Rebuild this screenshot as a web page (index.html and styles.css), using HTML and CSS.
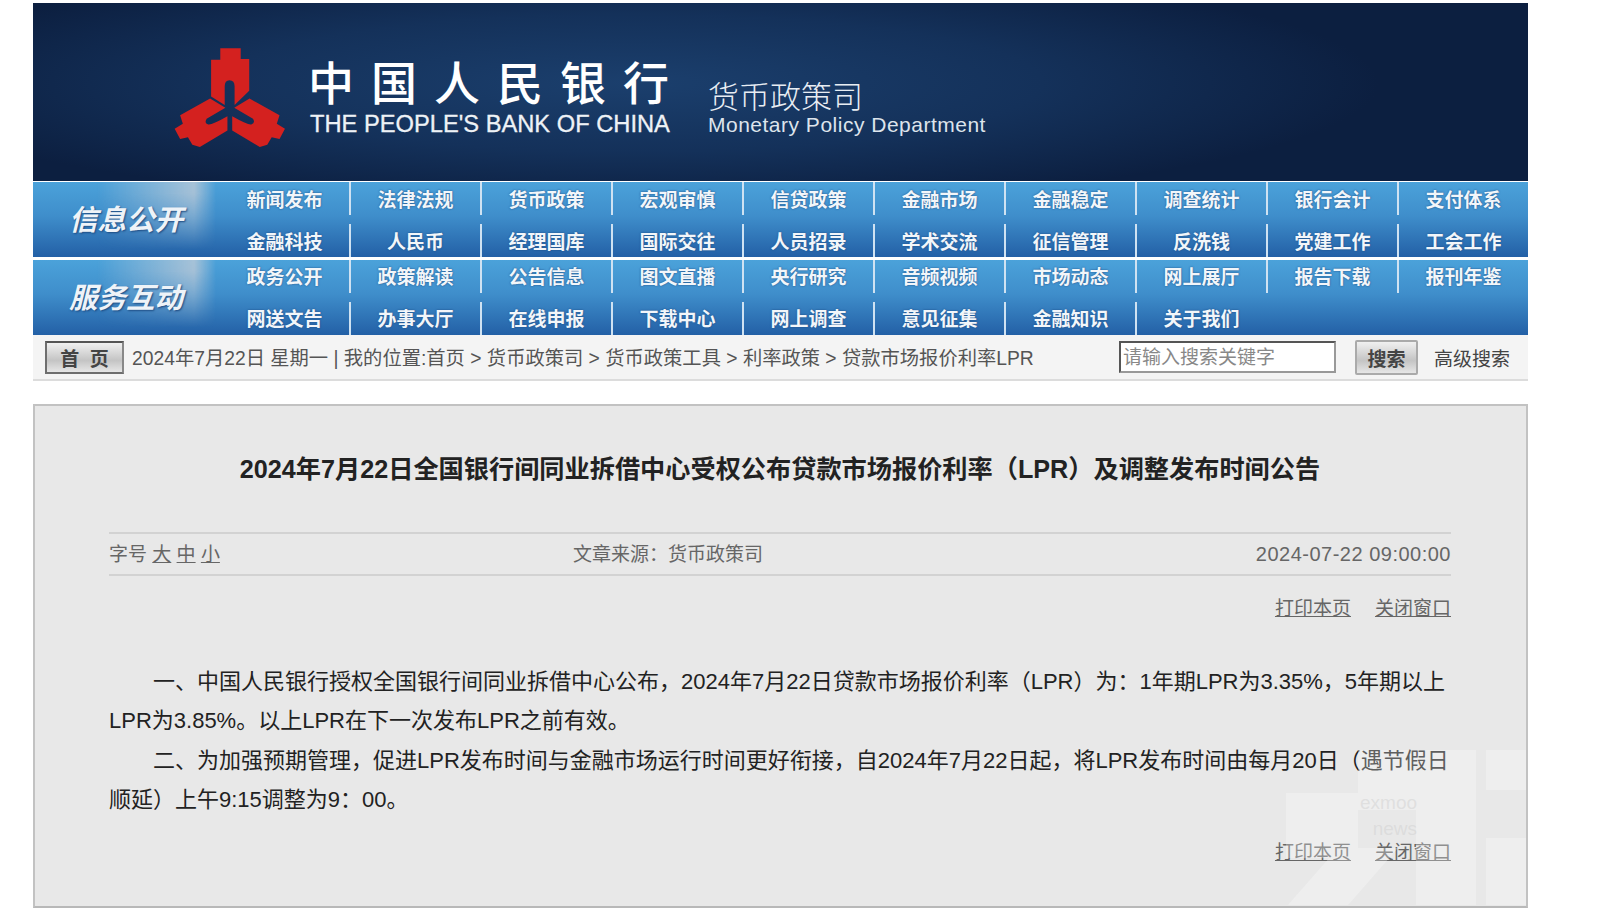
FILE: index.html
```html
<!DOCTYPE html>
<html lang="zh-CN">
<head>
  <meta charset="UTF-8">
  <meta name="viewport" content="width=device-width, initial-scale=1.0">
  <title>中国人民银行 货币政策司</title>
  <link rel="stylesheet" href="styles.css">
</head>
<body>
  <div class="page">
    <header class="banner">
      <svg class="logo" viewBox="0 0 420 360" aria-hidden="true">
        <path d="M180 38H240V70H265V163L222 205V150Q222 132 207 132Q193 132 193 150V205L153 180V72H180Z"/>
        <path d="M150 186L195 213L140 245Q132 258 145 262Q155 264 201 238V280L120 328L98 322L85 300L62 305L46 275L70 260L62 235Z"/>
        <path d="M266 186L221 213L276 245Q284 258 271 262Q261 264 215 238V280L296 328L318 322L331 300L354 305L370 275L346 260L354 235Z"/>
      </svg>
      <div class="brand">
        <div class="brand-cn">中国人民银行</div>
        <div class="brand-en">THE PEOPLE'S BANK OF CHINA</div>
      </div>
      <div class="dept">
        <div class="dept-cn">货币政策司</div>
        <div class="dept-en">Monetary Policy Department</div>
      </div>
    </header>

    <nav class="nav-group">
      <div class="nav-label"><span>信息公开</span></div>
      <div class="nav-grid">
        <a>新闻发布</a><a>法律法规</a><a>货币政策</a><a>宏观审慎</a><a>信贷政策</a><a>金融市场</a><a>金融稳定</a><a>调查统计</a><a>银行会计</a><a>支付体系</a>
        <a>金融科技</a><a>人民币</a><a>经理国库</a><a>国际交往</a><a>人员招录</a><a>学术交流</a><a>征信管理</a><a>反洗钱</a><a>党建工作</a><a>工会工作</a>
      </div>
    </nav>
    <nav class="nav-group second">
      <div class="nav-label"><span>服务互动</span></div>
      <div class="nav-grid">
        <a>政务公开</a><a>政策解读</a><a>公告信息</a><a>图文直播</a><a>央行研究</a><a>音频视频</a><a>市场动态</a><a>网上展厅</a><a>报告下载</a><a>报刊年鉴</a>
        <a>网送文告</a><a>办事大厅</a><a>在线申报</a><a>下载中心</a><a>网上调查</a><a>意见征集</a><a>金融知识</a><a>关于我们</a>
      </div>
    </nav>

    <div class="crumbs">
      <button class="home-btn">首 页</button>
      <span class="crumb-text">2024年7月22日 星期一 | 我的位置:首页 &gt; 货币政策司 &gt; 货币政策工具 &gt; 利率政策 &gt; 贷款市场报价利率LPR</span>
      <div class="search-box">请输入搜索关键字</div>
      <button class="search-btn">搜索</button>
      <span class="adv">高级搜索</span>
    </div>

    <main class="panel">
      <h1>2024年7月22日全国银行间同业拆借中心受权公布贷款市场报价利率（LPR）及调整发布时间公告</h1>
      <div class="meta">
        <span class="meta-size">字号 <u>大</u> <u>中</u> <u>小</u></span>
        <span class="meta-src">文章来源：货币政策司</span>
        <span class="meta-date">2024-07-22 09:00:00</span>
      </div>
      <div class="tools"><a>打印本页</a><a>关闭窗口</a></div>
      <article class="content">
        <p>一、中国人民银行授权全国银行间同业拆借中心公布，2024年7月22日贷款市场报价利率（LPR）为：1年期LPR为3.35%，5年期以上LPR为3.85%。以上LPR在下一次发布LPR之前有效。</p>
        <p>二、为加强预期管理，促进LPR发布时间与金融市场运行时间更好衔接，自2024年7月22日起，将LPR发布时间由每月20日（遇节假日顺延）上午9:15调整为9：00。</p>
      </article>
      <div class="tools bottom"><a>打印本页</a><a>关闭窗口</a></div>

      <!-- faint watermark over the corner -->
      <div class="watermark">
        <svg width="240" height="158" aria-hidden="true">
          <path d="M72 2H190V62H72ZM0 45H72V110H0ZM200 2H240V42H200ZM2 157L52 100H112L62 157ZM130 62H190V157H130ZM200 90H240V157H200Z"/>
        </svg>
        <span class="wm-text">exmoo<br>news</span>
      </div>
    </main>
  </div>
</body>
</html>
```

FILE: styles.css
```css
body {
  margin: 0;
  background-color: #fff;
  color: #222;
  font-family: "Liberation Sans", "Noto Sans CJK SC", sans-serif;
}

.page {
  width: 1495px;
  margin-left: 33px;
  padding-top: 3px;
}

.banner {
  height: 178px;
  display: flex;
  align-items: flex-start;
  background: radial-gradient(ellipse 50% 70% at 40% 45%, #1b3f6d 0%, #14315a 55%, #0c1f40 100%);
  background-color: #0c1f40;
  color: #fff;
  box-sizing: border-box;
}

.logo {
  width: 143px;
  height: 123px;
  margin: 32px 0 0 126px;
  fill: #d4211f;
  flex: none;
}

.brand {
  margin: 53px 0 0 6px;
  width: 398px;
  flex: none;
}

.brand-cn {
  font-size: 46px;
  line-height: 56px;
  font-weight: 500;
  letter-spacing: 17px;
}

.brand-en {
  font-size: 23.7px;
  line-height: 28px;
  margin: -2px 0 0 2px;
  color: #eef2f6;
  -webkit-text-stroke: 0.3px #eef2f6;
}

.dept {
  margin-top: 76px;
  margin-left: 2px;
}

.dept-cn {
  font-size: 31px;
  line-height: 38px;
  font-weight: 300;
  color: #e8edf3;
}

.dept-en {
  font-size: 21px;
  line-height: 26px;
  margin-top: -5px;
  letter-spacing: 0.5px;
  color: #dde4ec;
}

.nav-group {
  height: 75px;
  margin-top: 1px;
  display: flex;
  background: linear-gradient(#4ba2da, #3f8ecb 45%, #2360a6);
  color: #f2f6fa;
}

.nav-group.second {
  margin-top: 3px;
}

.nav-label {
  position: relative;
  width: 183px;
  flex: none;
  display: flex;
  align-items: center;
  justify-content: center;
  box-sizing: border-box;
  padding: 0 0 5px 3px;
  font-size: 28.5px;
  font-weight: 700;
  font-style: italic;
  color: #eef3f8;
  text-shadow: 1px 1px 2px #1c4a80;
}

/* grey sheen on the right of the label, fading downwards */
.nav-label::before {
  content: "";
  position: absolute;
  inset: 0;
  background: linear-gradient(to right, rgba(205, 208, 215, 0) 35%, rgba(205, 208, 215, 0.7) 88%, rgba(205, 208, 215, 0) 100%);
  -webkit-mask-image: linear-gradient(#000 15%, transparent 90%);
  mask-image: linear-gradient(#000 15%, transparent 90%);
}

.nav-label span {
  position: relative;
}

.nav-grid {
  flex: 1;
  display: grid;
  grid-template-columns: 133px repeat(9, 1fr);
  grid-template-rows: 33px 33px;
  row-gap: 9px;
}

.nav-grid a {
  display: flex;
  align-items: center;
  justify-content: center;
  font-size: 19px;
  font-weight: 700;
  text-shadow: 0 0 2px #1c4a80;
  border-left: 2px solid #cfe2f2;
}

.nav-grid a:nth-child(10n+1) {
  border-left: none;
  padding-left: 4px;
}

.second .nav-grid a {
  padding-bottom: 2px;
}

.crumbs {
  height: 46px;
  display: flex;
  align-items: center;
  background-color: #f4f4f4;
  border-bottom: 2px solid #dcdcdc;
  box-sizing: border-box;
  color: #555;
  font-size: 19px;
}

.home-btn, .search-btn {
  font-family: inherit;
  font-weight: 700;
  color: #444;
  background: linear-gradient(#f0f0f0, #c4c4c4 60%, #e6e6e6);
  padding: 0;
  flex: none;
}

.home-btn {
  width: 79px;
  height: 33px;
  margin-left: 12px;
  font-size: 19px;
  word-spacing: 6px;
  border: 2px solid #6e6e6e;
  border-top-color: #555;
  border-right-color: #888;
  font-family: "Noto Sans CJK SC", sans-serif;
}

.crumb-text {
  margin-left: 8px;
  width: 987px;
  flex: none;
  font-size: 19.3px;
  white-space: nowrap;
}

.search-box {
  width: 217px;
  height: 32px;
  line-height: 29px;
  box-sizing: border-box;
  padding-left: 2px;
  border: 2px solid #555;
  border-right-color: #999;
  border-bottom-color: #999;
  background-color: #fff;
  color: #888;
  flex: none;
}

.search-btn {
  width: 63px;
  height: 35px;
  margin-left: 19px;
  font-size: 19px;
  border: 2px solid #aaa;
  border-radius: 2px;
}

.adv {
  margin-left: 16px;
  color: #444;
}

.panel {
  position: relative;
  height: 504px;
  margin-top: 23px;
  padding: 0 75px 0 74px;
  box-sizing: border-box;
  background-color: #e8e8e8;
  border: 2px solid #c2c2c2;
  border-bottom-color: #b8b8b8;
  overflow: hidden;
}

h1 {
  margin: 46px 0 0;
  font-size: 25.2px;
  line-height: 34px;
  font-weight: 700;
  text-align: center;
  color: #222;
  white-space: nowrap;
}

.meta {
  margin-top: 46px;
  height: 44px;
  display: flex;
  align-items: center;
  border-top: 2px solid #d2d2d2;
  border-bottom: 2px solid #d2d2d2;
  box-sizing: border-box;
  color: #666;
  font-size: 19px;
}

.meta-size {
  width: 464px;
  padding-bottom: 3px;
}

.meta-src {
  flex: 1;
  padding-bottom: 3px;
}

.meta-date {
  font-size: 20px;
  letter-spacing: 0.5px;
}

.tools {
  margin-top: 20px;
  display: flex;
  justify-content: flex-end;
  gap: 24px;
  font-size: 19px;
  line-height: 26px;
  color: #666;
}

.tools a {
  text-decoration: underline;
}

.content {
  margin-top: 39.5px;
  font-size: 22px;
  line-height: 39.5px;
  color: #222;
}

.content p {
  margin: 0;
  text-indent: 44px;
}

.tools.bottom {
  margin-top: 20px;
}

.watermark {
  position: absolute;
  right: 0;
  bottom: 0;
  width: 240px;
  height: 158px;
  pointer-events: none;
}

.watermark svg {
  display: block;
  fill: rgba(255, 255, 255, 0.28);
}

.wm-text {
  position: absolute;
  top: 42px;
  left: 74px;
  font-size: 19px;
  line-height: 26px;
  color: rgba(200, 200, 200, 0.4);
  text-align: right;
}
```
